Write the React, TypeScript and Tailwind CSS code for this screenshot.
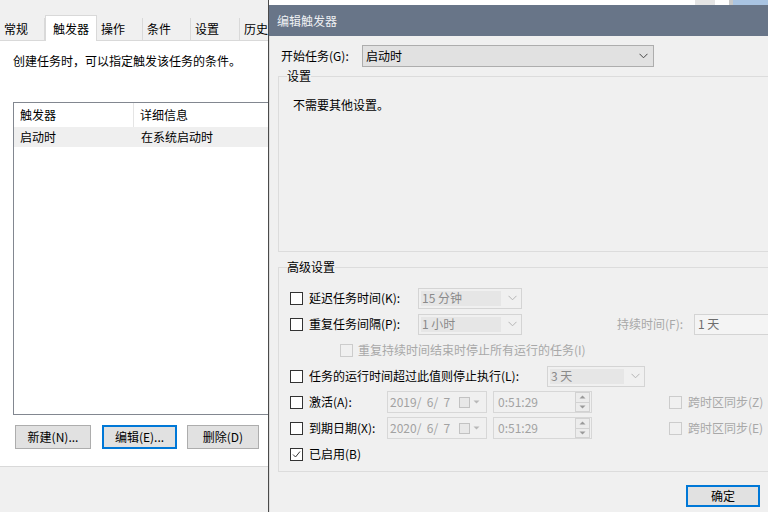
import React from 'react';

const Chevron = ({ color = '#333' }: { color?: string }) => (
  <svg width="9" height="6" viewBox="0 0 9 6">
    <polyline points="0.5,0.8 4.5,4.8 8.5,0.8" fill="none" stroke={color} strokeWidth="1" />
  </svg>
);

const CheckBox = ({ checked = false, disabled = false }: { checked?: boolean; disabled?: boolean }) => (
  <span
    className={`flex h-[13px] w-[13px] shrink-0 items-center justify-center border ${
      disabled ? 'border-[#cccccc] bg-[#f0f0f0]' : 'border-[#333333] bg-white'
    }`}
  >
    {checked && (
      <svg width="11" height="11" viewBox="0 0 11 11">
        <polyline points="2,5.5 4.5,8 9,2.5" fill="none" stroke="#333" strokeWidth="1" />
      </svg>
    )}
  </span>
);

const DisabledSelect = ({ value, width }: { value: string; width: string }) => (
  <div className={`flex h-[21px] ${width} items-stretch border border-[#d4d4d4] bg-[#f0f0f0]`}>
    <span className="m-[2px] flex flex-1 items-center bg-[#e6e6e6] pl-[1px] text-[#8a8a8a]">{value}</span>
    <span className="flex w-[18px] items-center justify-center">
      <Chevron color="#b5b5b5" />
    </span>
  </div>
);

const DateBox = ({ value }: { value: string }) => (
  <div className="flex h-[22px] w-[100px] items-center border border-[#d7d7d7] bg-[#f0f0f0] pl-[2px] text-[#a2a2a2]">
    <span className="flex-1 whitespace-pre">{value}</span>
    <span className="mr-[2px] h-[11px] w-[11px] border border-[#c2c2c2] bg-[#e8e8e8]" />
    <svg width="9" height="6" viewBox="0 0 9 6" className="mr-[5px]">
      <polygon points="1.5,1.5 7.5,1.5 4.5,4.5" fill="#b8b8b8" />
    </svg>
  </div>
);

const TimeBox = ({ value }: { value: string }) => (
  <div className="flex h-[22px] w-[99px] items-center border border-[#d7d7d7] bg-[#f0f0f0] pl-[4px] text-[#a2a2a2]">
    <span className="flex-1">{value}</span>
    <span className="mr-[1px] flex h-[20px] w-[15px] flex-col">
      <span className="flex flex-1 items-center justify-center border border-[#d2d2d2] bg-[#ececec]">
        <svg width="7" height="4" viewBox="0 0 7 4">
          <polygon points="0.5,3.5 6.5,3.5 3.5,0.5" fill="#9a9a9a" />
        </svg>
      </span>
      <span className="flex flex-1 items-center justify-center border border-t-0 border-[#d2d2d2] bg-[#ececec]">
        <svg width="7" height="4" viewBox="0 0 7 4">
          <polygon points="0.5,0.5 6.5,0.5 3.5,3.5" fill="#9a9a9a" />
        </svg>
      </span>
    </span>
  </div>
);

const tabs = [
  { label: '常规', w: 'w-[45px]' },
  { label: '触发器', w: 'w-[52px]', active: true },
  { label: '操作', w: 'w-[46px]' },
  { label: '条件', w: 'w-[48px]' },
  { label: '设置', w: 'w-[49px]' },
  { label: '历史', w: 'w-[40px]' },
];

export default function App() {
  return (
    <div className="flex h-[512px] w-[768px] overflow-hidden bg-[#f0f0f0] font-['Noto_Sans_CJK_SC','Noto_Sans',sans-serif] text-[12px] leading-[16px] text-black">
      {/* property sheet behind */}
      <div className="flex w-[268px] shrink-0 flex-col overflow-hidden">
        <div className="h-[17px] bg-[#f0f0f0]" />
        <div className="flex h-[24px] items-end border-b border-[#d9d9d9] bg-[#f0f0f0]">
          {tabs.map((t) =>
            t.active ? (
              <div
                key={t.label}
                className={`-mb-px flex h-[26px] ${t.w} shrink-0 items-center justify-center border border-b-0 border-[#d9d9d9] bg-white`}
              >
                {t.label}
              </div>
            ) : (
              <div
                key={t.label}
                className={`flex h-[22px] ${t.w} shrink-0 items-center border-r border-[#d9d9d9] pl-[4px]`}
              >
                {t.label}
              </div>
            )
          )}
        </div>
        <div className="flex h-[425px] flex-col bg-white pl-[13px]">
          <div className="mt-[12px]">创建任务时，可以指定触发该任务的条件。</div>
          <div className="mt-[33px] h-[313px] w-[300px] shrink-0 border border-[#828790] bg-white">
            <div className="flex h-[24px] items-center">
              <span className="flex h-full w-[120px] items-center border-r border-[#e5e5e5] pl-[6px]">触发器</span>
              <span className="pl-[6px]">详细信息</span>
            </div>
            <div className="flex h-[20px] items-center bg-[#efefef]">
              <span className="w-[120px] pl-[6px]">启动时</span>
              <span className="pl-[7px]">在系统启动时</span>
            </div>
          </div>
          <div className="mt-[10px] flex items-center">
            <button className="ml-[2px] h-[24px] w-[76px] border border-[#adadad] bg-[#e1e1e1]">新建(N)...</button>
            <button className="ml-[11px] h-[24px] w-[75px] border-2 border-[#0078d7] bg-[#e1e1e1]">编辑(E)...</button>
            <button className="ml-[10px] h-[24px] w-[72px] border border-[#adadad] bg-[#e1e1e1]">删除(D)</button>
          </div>
        </div>
        <div className="flex-1 border-t border-[#d9d9d9] bg-[#f0f0f0]" />
      </div>

      {/* edit trigger dialog */}
      <div className="flex flex-1 flex-col border-l border-[#4a4a4a]">
        <div className="flex h-[5px] bg-white">
          <div className="flex-1" />
          <div className="w-[20px] bg-[#e4e4e4]" />
          <div className="w-[14px]" />
          <div className="w-[4px] bg-[#c8c8c8]" />
          <div className="w-[65px] bg-[#a9c4e2]" />
        </div>
        <div className="flex h-[31px] items-center bg-[#687588] pl-[8px] text-[#eef0f3]">编辑触发器</div>
        <div className="flex flex-1 flex-col overflow-hidden border-l border-[#dcdcdc] pl-[8px]">
          <div className="mt-[9px] flex h-[22px] items-center">
            <span className="ml-[3px] w-[81px]">开始任务(G):</span>
            <div className="flex h-[22px] w-[292px] items-center border border-[#adadad] bg-[#e1e1e1] pl-[3px]">
              <span className="flex-1">启动时</span>
              <span className="mr-[5px]">
                <Chevron color="#444" />
              </span>
            </div>
          </div>

          <fieldset className="mt-[1px] h-[184px] w-[520px] shrink-0 border border-[#dcdcdc]">
            <legend className="ml-[8px] px-0">设置</legend>
            <div className="mt-[13px] pl-[14px]">不需要其他设置。</div>
          </fieldset>

          <fieldset className="mt-[7px] h-[213px] w-[520px] shrink-0 border border-[#dcdcdc]">
            <legend className="ml-[8px] px-0">高级设置</legend>
            <div className="mt-[10px] flex flex-col pl-[11px]">
              <div className="flex h-[26px] items-center">
                <CheckBox />
                <span className="ml-[6px] w-[109px]">延迟任务时间(K):</span>
                <DisabledSelect value="15 分钟" width="w-[104px]" />
              </div>
              <div className="flex h-[26px] items-center">
                <CheckBox />
                <span className="ml-[6px] w-[109px]">重复任务间隔(P):</span>
                <DisabledSelect value="1 小时" width="w-[104px]" />
                <span className="ml-[95px] w-[77px] text-[#a8a8a8]">持续时间(F):</span>
                <div className="flex h-[21px] w-[100px] items-center border border-[#d4d4d4] bg-[#f4f4f4] pl-[3px] text-[#6d6d6d]">
                  1 天
                </div>
              </div>
              <div className="flex h-[26px] items-center pl-[50px] text-[#a8a8a8]">
                <CheckBox disabled />
                <span className="ml-[5px]">重复持续时间结束时停止所有运行的任务(I)</span>
              </div>
              <div className="flex h-[26px] items-center">
                <CheckBox />
                <span className="ml-[6px] w-[238px]">任务的运行时间超过此值则停止执行(L):</span>
                <DisabledSelect value="3 天" width="w-[98px]" />
              </div>
              <div className="flex h-[26px] items-center">
                <CheckBox />
                <span className="ml-[6px] w-[78px]">激活(A):</span>
                <DateBox value="2019/  6/  7" />
                <span className="ml-[6px]">
                  <TimeBox value="0:51:29" />
                </span>
                <span className="ml-[77px]">
                  <CheckBox disabled />
                </span>
                <span className="ml-[6px] text-[#a8a8a8]">跨时区同步(Z)</span>
              </div>
              <div className="flex h-[26px] items-center">
                <CheckBox />
                <span className="ml-[6px] w-[78px]">到期日期(X):</span>
                <DateBox value="2020/  6/  7" />
                <span className="ml-[6px]">
                  <TimeBox value="0:51:29" />
                </span>
                <span className="ml-[77px]">
                  <CheckBox disabled />
                </span>
                <span className="ml-[6px] text-[#a8a8a8]">跨时区同步(E)</span>
              </div>
              <div className="flex h-[26px] items-center">
                <CheckBox checked />
                <span className="ml-[6px]">已启用(B)</span>
              </div>
            </div>
          </fieldset>

          <div className="mt-[13px] flex">
            <button className="ml-[408px] h-[22px] w-[74px] border-2 border-[#0078d7] bg-[#e1e1e1]">确定</button>
          </div>
        </div>
      </div>
    </div>
  );
}
